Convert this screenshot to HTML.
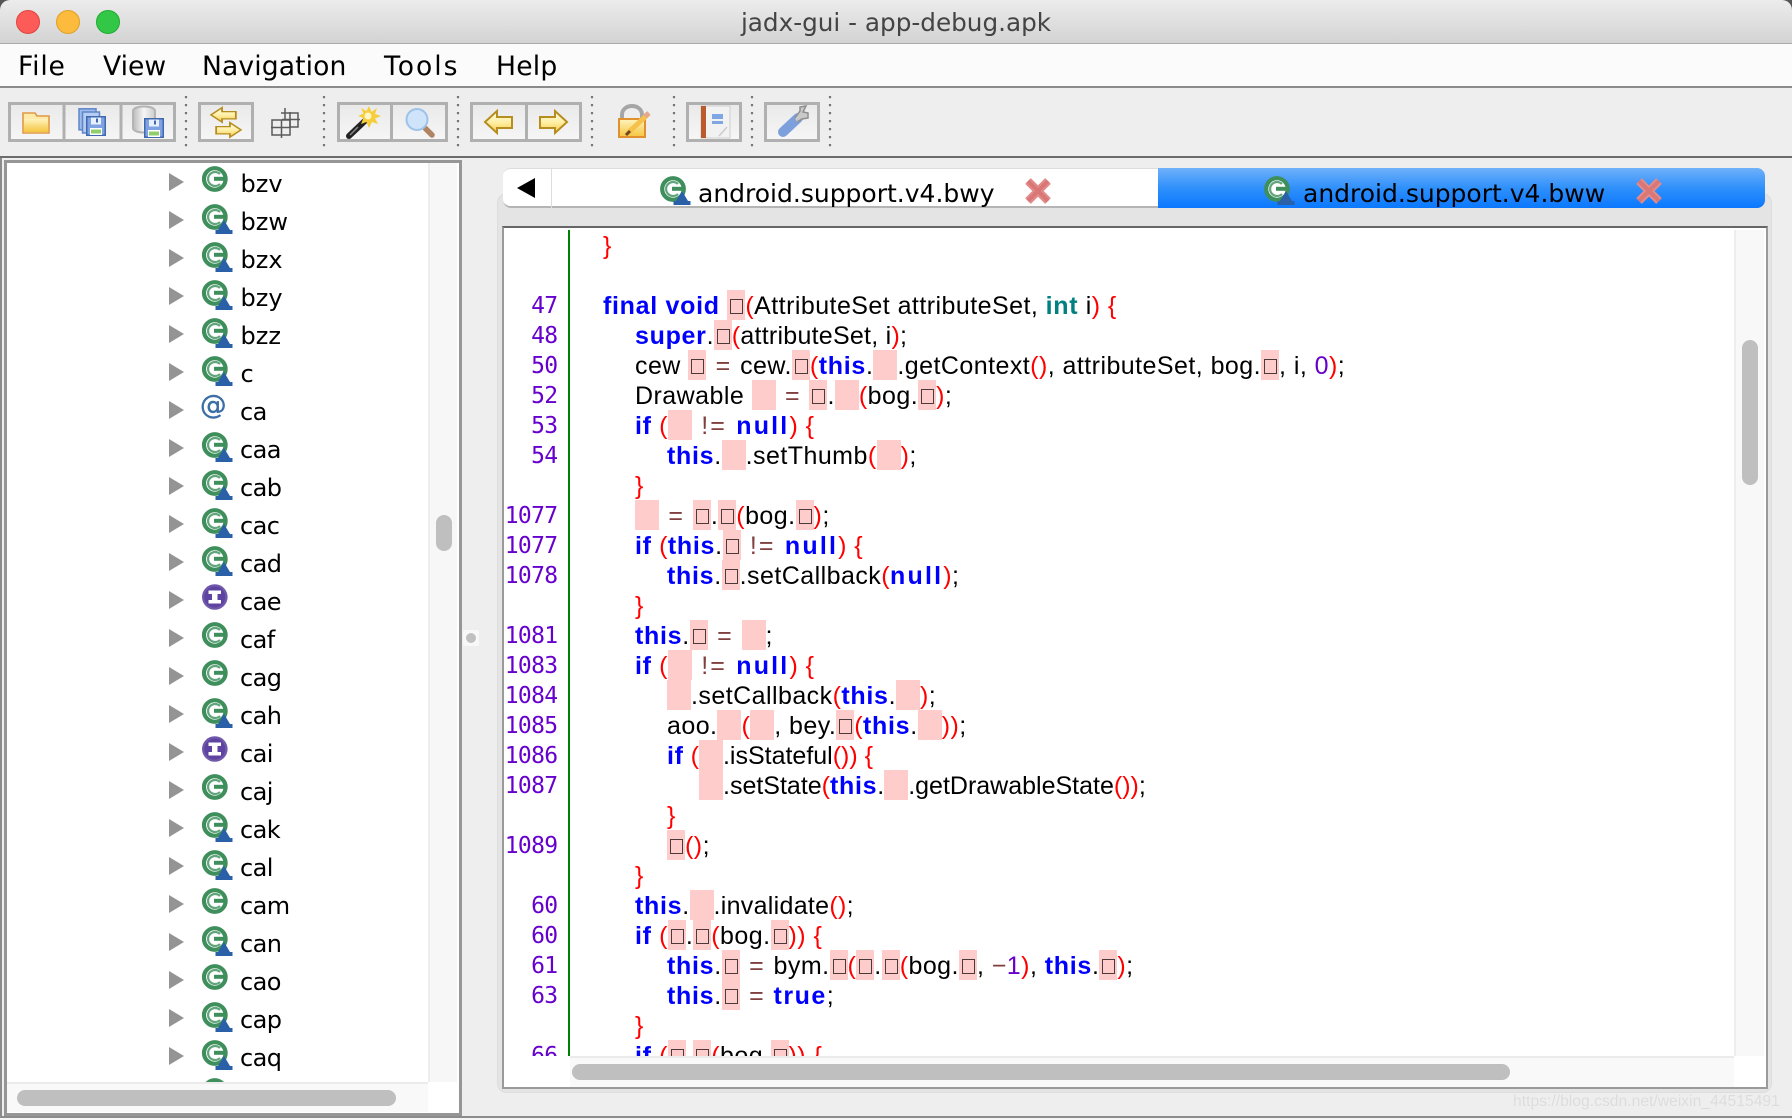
<!DOCTYPE html>
<html><head><meta charset="utf-8"><title>jadx-gui - app-debug.apk</title>
<style>
html,body{margin:0;padding:0;width:1792px;height:1120px;overflow:hidden;background:#eee}
div{position:absolute}
#title{left:0;top:0;width:1792px;height:43px;background:linear-gradient(#ececec,#d3d3d3);border-bottom:1px solid #a9a9a9;border-radius:10px 10px 0 0;box-sizing:content-box}
#corner{left:0;top:0;width:1792px;height:12px;background:#555}
#ttext{left:0;top:7px;width:1792px;text-align:center;font:24.7px/32px "DejaVu Sans",sans-serif;color:#444}
.lt{width:24px;height:24px;border-radius:50%;top:10px;box-sizing:border-box}
#menu{left:0;top:44px;width:1792px;height:42px;background:#fbfbfb;border-bottom:2px solid #8a8a8a}
.m{top:6px;font:26.6px/34px "DejaVu Sans",sans-serif;color:#000}
#tbline{left:0;top:156px;width:1792px;height:2px;background:#6c6c6c}
#winl{left:0;top:158px;width:2px;height:958px;background:#8c8c8c}
#winb{left:0;top:1116px;width:1792px;height:2px;background:#8c8c8c}
#winb2{left:0;top:1118px;width:1792px;height:2px;background:#f6f6f6}
#tree{left:4px;top:160px;width:458px;height:956px;box-sizing:border-box;border:3px solid #969696;background:#fff}
#treec{left:6px;top:163px;width:422px;height:919px;overflow:hidden}
#treec svg{position:absolute;left:-6px;top:-163px}
#rows text.c{letter-spacing:-.6px}
#tv{left:428px;top:163px;width:29px;height:919px;background:#f7f7f7;border-left:2px solid #ededed;box-sizing:border-box}
#tvt{left:436px;top:515px;width:16px;height:36px;background:#bfbfbf;border-radius:8px}
#th{left:7px;top:1082px;width:421px;height:30px;background:#f9f9f9;border-top:2px solid #ebebeb;box-sizing:border-box}
#tht{left:17px;top:1090px;width:379px;height:16px;background:#bfbfbf;border-radius:8px}
#knobb{left:463px;top:630px;width:16px;height:16px;background:#f8f8f8;border-radius:2px}
#knob{left:466px;top:633px;width:10px;height:10px;background:#c0c0c0;border-radius:50%}
#pane{left:497px;top:193px;height:900px;width:1275px;background:#e4e4e4;border-radius:10px;box-shadow:inset 0 0 0 1px #ddd}
#tabs{left:503px;top:168px;width:1262px;height:40px;background:#fff;border-radius:8px;box-sizing:border-box;border-bottom:2px solid #b4b4b4;border-top:1px solid #ddd}
#tdiv{left:551px;top:168px;width:1px;height:40px;background:#ddd}
#tab2{left:1158px;top:168px;width:607px;height:40px;background:linear-gradient(#6fb1fa,#2f90fb 50%,#0a78ff);border-radius:0 8px 8px 0}
.tt{font:25px/30px "DejaVu Sans",sans-serif;color:#000;white-space:pre;top:179px}
#cb{left:502px;top:226px;width:1266px;height:863px;box-sizing:border-box;background:#fff;border:2px solid #9a9a9a;border-top-color:#666}
#gl{left:568px;top:230px;width:2px;height:826px;background:#008000}
#nums{left:504px;top:230px;width:53.500px;height:826px;overflow:hidden;font:23px/32px "DejaVu Sans Mono",monospace;letter-spacing:-.65px;color:#6600cc;text-align:right}
#nums p{margin:0;height:30px}
#code{left:571px;top:230px;width:1163px;height:826px;overflow:hidden;font:25px/32px "Liberation Sans",sans-serif;color:#000;white-space:pre;letter-spacing:.45px}
#code p{margin:0;height:30px;padding-left:32px}
#code p.a{padding-left:64px}#code p.c{padding-left:96px}#code p.d{padding-left:128px}
#code b{color:#00f;letter-spacing:.7px}
#code b.l{letter-spacing:2.2px}
#code b.t{letter-spacing:1.5px}
#code em{color:#008080;font-style:normal;font-weight:bold;letter-spacing:.7px}
#code u{color:#f00;text-decoration:none}
#code s{color:#804040;text-decoration:none;margin:0 2px}
#code s.ne{letter-spacing:2px}
#code s.mi{margin:0}
#code var{color:#60c;font-style:normal}
#code i,#code tt{display:inline-block;background:#fcc;height:30px;vertical-align:top;position:relative}
#code i{width:18px}#code tt{width:24px}
#code i:after{content:"";position:absolute;left:3px;top:9px;width:11px;height:13px;border:1px solid #4a3a3a}
#vt{left:1734px;top:230px;width:30px;height:826px;background:#f8f8f8;border-left:2px solid #eee;box-sizing:border-box}
#vtt{left:1742px;top:340px;width:16px;height:145px;background:#bfbfbf;border-radius:8px}
#ht{left:570px;top:1056px;width:1164px;height:31px;background:#f9f9f9;border-top:2px solid #ebebeb;box-sizing:border-box}
#htt{left:572px;top:1064px;width:938px;height:16px;background:#bfbfbf;border-radius:8px}
#wm{left:1513px;top:1092px;font:15.7px/20px "Liberation Sans",sans-serif;color:#dcdcdc;white-space:nowrap;text-shadow:0 0 1px #f4f4f4}
svg text{white-space:pre}
</style></head><body>
<div id="corner"></div>
<div id="title"></div>
<div id="ttext">jadx-gui - app-debug.apk</div>
<div class="lt" style="left:16px;background:#fc5b57;border:1px solid #e0443e"></div>
<div class="lt" style="left:56px;background:#fdbb3d;border:1px solid #dea123"></div>
<div class="lt" style="left:96px;background:#33c748;border:1px solid #1fab2e"></div>
<div id="menu"></div>
<div class="m" style="left:18px;top:50px;letter-spacing:.8px">File</div>
<div class="m" style="left:103px;top:50px">View</div>
<div class="m" style="left:202px;top:50px;letter-spacing:.1px">Navigation</div>
<div class="m" style="left:384px;top:50px;letter-spacing:2px">Tools</div>
<div class="m" style="left:496px;top:50px;letter-spacing:.2px">Help</div>

<svg style="position:absolute;left:0;top:0" width="1792" height="160" viewBox="0 0 1792 160">
<defs>
<linearGradient id="bf" x1="0" y1="0" x2="0" y2="1"><stop offset="0" stop-color="#e9e9e9"/><stop offset="1" stop-color="#f6f6f6"/></linearGradient>
<linearGradient id="yf" x1="0" y1="0" x2="0" y2="1"><stop offset="0" stop-color="#fff3bd"/><stop offset="1" stop-color="#f5c53f"/></linearGradient>
<linearGradient id="yf2" x1="0" y1="0" x2="0" y2="1"><stop offset="0" stop-color="#fffbe0"/><stop offset=".5" stop-color="#fff0a8"/><stop offset="1" stop-color="#f7c948"/></linearGradient>
<linearGradient id="cy" x1="0" y1="0" x2="1" y2="0"><stop offset="0" stop-color="#bbb"/><stop offset=".5" stop-color="#f6f6f6"/><stop offset="1" stop-color="#ccc"/></linearGradient>
<g id="fl"><rect x=".75" y=".75" width="18.500" height="18.500" fill="#7fa3e2" stroke="#3f68ad" stroke-width="1.500"/><rect x="5" y="1.500" width="10" height="7" fill="#e8f0ff"/><rect x="10" y="2.500" width="2" height="4" fill="#3f68ad"/><rect x="4" y="12" width="12" height="7" fill="#fff"/><rect x="5" y="13.500" width="10" height="4" fill="#8fce6b"/></g>
<path id="lar" d="M0 12 L12 1 V7 H27 V18 H12 V23 Z" stroke="#b68d1f" stroke-width="2" fill="url(#yf2)" stroke-linejoin="miter"/>
</defs>
<g fill="url(#bf)" stroke="#b0b0b0" stroke-width="3">
<rect x="9.500" y="103.500" width="165" height="37"/><path d="M64 103V140M121 103V140" fill="none"/>
<rect x="199.500" y="103.500" width="53" height="37"/>
<rect x="338.500" y="103.500" width="108" height="37"/><path d="M391.500 103V140" fill="none"/>
<rect x="471.500" y="103.500" width="109" height="37"/><path d="M526.500 103V140" fill="none"/>
<rect x="687.500" y="103.500" width="53" height="37"/>
<rect x="765.500" y="103.500" width="53" height="37"/>
</g>
<g stroke="#777" stroke-width="2.200" stroke-dasharray="2.200 5.800">
<path d="M186 96V147M324 96V147M458 96V147M592 96V147M674 96V147M752 96V147M830 96V147"/>
</g>
<!-- folder -->
<path d="M23 113H35L37 116H49V133H23Z" fill="#fde9a8" stroke="#e09a45" stroke-width="1.600"/>
<path d="M24 119H48V132H24Z" fill="url(#yf)"/>
<!-- copies -->
<rect x="79" y="108.800" width="17" height="21" fill="#9fbbec" stroke="#5f86c8" stroke-width="1.500"/>
<rect x="82.500" y="112" width="17" height="21" fill="#b6ccf2" stroke="#5f86c8" stroke-width="1.500"/>
<use href="#fl" x="86" y="116"/>
<!-- db -->
<path d="M133 111C133 105 155 105 155 111V128C155 134 133 134 133 128Z" fill="url(#cy)" stroke="#b4b4b4" stroke-width="2"/>
<use href="#fl" x="144" y="118"/>
<!-- sync -->
<g transform="translate(211,107) scale(.92,.66)"><use href="#lar"/></g>
<g transform="translate(241,122) scale(-.92,.66)"><use href="#lar"/></g>
<!-- grid -->
<g fill="none" stroke="#5a5a5a" stroke-width="1.500">
<path d="M281 113H298V127H290"/>
<path d="M272 120H290V135H272Z"/>
<path d="M281.500 120V138M290 112V127M285 108V120M271 127.500H291M282 119.500H300"/>
</g>
<!-- wand -->
<path d="M349 136L368 118" stroke="#222" stroke-width="6" stroke-linecap="round"/>
<path d="M350 135L358 127" stroke="#888" stroke-width="1.500"/>
<path d="M369 106L371.500 112L377 108L375 114L381 116L375 118.500L378 124L372 122L369 128L366.500 122L361 124L363.500 118L358 116L363.500 113.500L361 108L366.500 111Z" fill="#f6cd3a"/>
<circle cx="368" cy="116" r="3.500" fill="#fff6c8"/>
<!-- magnifier -->
<path d="M425 128L432 135" stroke="#b18564" stroke-width="5.500" stroke-linecap="round"/>
<circle cx="417" cy="119.500" r="10.500" fill="#cfe3fa" stroke="#9cc3ea" stroke-width="2"/>
<!-- arrows -->
<use href="#lar" x="485" y="110"/>
<g transform="translate(567,110) scale(-1,1)"><use href="#lar"/></g>
<!-- lock -->
<path d="M622 120V115C622 103 642 103 642 115V120" fill="none" stroke="#a6a6a6" stroke-width="4"/>
<rect x="619" y="119" width="26" height="18" fill="url(#yf)" stroke="#e0902f" stroke-width="2"/>
<path d="M628 133L648 114" stroke="#f6c14a" stroke-width="5"/>
<path d="M645 116.500L649 113" stroke="#e6a888" stroke-width="5"/>
<path d="M626 135L630 131" stroke="#6b4820" stroke-width="3"/>
<!-- book -->
<rect x="701" y="106" width="29" height="32" fill="#f2f2f2" stroke="#cfcfcf"/>
<rect x="701" y="106" width="5" height="32" fill="#bb5a2c"/>
<rect x="712" y="114" width="11" height="5" fill="#7fa7e4"/><rect x="712" y="121" width="11" height="3" fill="#7fa7e4"/>
<path d="M719 136L727 127" stroke="#ccc" stroke-width="1.500"/>
<!-- wrench -->
<path d="M783 132L798 118" stroke="#7da0dd" stroke-width="10" stroke-linecap="round"/>
<path d="M795 118L800 111V107L806 106L803 112L808 113V118L802 119L797 122" fill="#c9c9c9" stroke="#8f8f8f" stroke-width="1.500"/>
</svg>

<div id="tbline"></div><div id="winl"></div><div id="winb"></div><div id="winb2"></div>

<div id="tree"></div>
<div id="treec">
<svg width="1792" height="1120" viewBox="0 0 1792 1120" font-family="'DejaVu Sans',sans-serif" font-size="24" fill="#000">
<defs>
<polygon id="ar" points="169,173 184,182 169,191" fill="#949494"/>
<g id="g"><circle cx="12.800" cy="13" r="10.800" fill="#fff" stroke="#3f8f5c" stroke-width="4.200"/><path d="M18 8A7 7 0 1 0 18 18" fill="none" stroke="#62a57c" stroke-width="2.200"/><rect x="12" y="10.800" width="13" height="4" fill="#3f8f5c"/></g>
<path id="tr" d="M22 16L25 21L28 26H30.500V30H13.500V26H16L19 21Z" fill="#2a60a8"/>
<g id="p"><use href="#g"/><use href="#tr"/></g>
<g id="n"><circle cx="12.800" cy="13" r="12.800" fill="#7058ab"/><circle cx="12.800" cy="13" r="10.500" fill="#5e43a0"/><path d="M6.500 6.500H19V10H15.500V16H19V19.500H6.500V16H10V10H6.500Z" fill="#fff"/></g>
</defs>
<g id="rows">
<use href="#ar"/><use href="#g" x="202" y="166"/><text x="240.500" y="192">bzv</text>
<use href="#ar" y="38"/><use href="#p" x="202" y="204"/><text x="240.500" y="230">bzw</text>
<use href="#ar" y="76"/><use href="#p" x="202" y="242"/><text x="240.500" y="268">bzx</text>
<use href="#ar" y="114"/><use href="#p" x="202" y="280"/><text x="240.500" y="306">bzy</text>
<use href="#ar" y="152"/><use href="#p" x="202" y="318"/><text x="240.500" y="344">bzz</text>
<use href="#ar" y="190"/><use href="#p" x="202" y="356"/><text x="240.500" y="382">c</text>
<use href="#ar" y="228"/><text x="200" y="414" font-size="26.500" fill="#3b6ea5" stroke="#3b6ea5" stroke-width=".4">@</text><text class="c" x="240" y="420">ca</text>
<use href="#ar" y="266"/><use href="#p" x="202" y="432"/><text class="c" x="240" y="458">caa</text>
<use href="#ar" y="304"/><use href="#p" x="202" y="470"/><text class="c" x="240" y="496">cab</text>
<use href="#ar" y="342"/><use href="#p" x="202" y="508"/><text class="c" x="240" y="534">cac</text>
<use href="#ar" y="380"/><use href="#p" x="202" y="546"/><text class="c" x="240" y="572">cad</text>
<use href="#ar" y="418"/><use href="#n" x="202" y="584"/><text class="c" x="240" y="610">cae</text>
<use href="#ar" y="456"/><use href="#g" x="202" y="622"/><text class="c" x="240" y="648">caf</text>
<use href="#ar" y="494"/><use href="#g" x="202" y="660"/><text class="c" x="240" y="686">cag</text>
<use href="#ar" y="532"/><use href="#p" x="202" y="698"/><text class="c" x="240" y="724">cah</text>
<use href="#ar" y="570"/><use href="#n" x="202" y="736"/><text class="c" x="240" y="762">cai</text>
<use href="#ar" y="608"/><use href="#g" x="202" y="774"/><text class="c" x="240" y="800">caj</text>
<use href="#ar" y="646"/><use href="#p" x="202" y="812"/><text class="c" x="240" y="838">cak</text>
<use href="#ar" y="684"/><use href="#p" x="202" y="850"/><text class="c" x="240" y="876">cal</text>
<use href="#ar" y="722"/><use href="#g" x="202" y="888"/><text class="c" x="240" y="914">cam</text>
<use href="#ar" y="760"/><use href="#p" x="202" y="926"/><text class="c" x="240" y="952">can</text>
<use href="#ar" y="798"/><use href="#g" x="202" y="964"/><text class="c" x="240" y="990">cao</text>
<use href="#ar" y="836"/><use href="#p" x="202" y="1002"/><text class="c" x="240" y="1028">cap</text>
<use href="#ar" y="874"/><use href="#p" x="202" y="1040"/><text class="c" x="240" y="1066">caq</text>
<use href="#g" x="202" y="1078"/>
</g>
</svg>
</div>
<div id="tv"></div><div id="tvt"></div><div id="th"></div><div id="tht"></div>
<div id="knobb"></div><div id="knob"></div>

<div id="pane"></div>
<div id="tabs"></div><div id="tdiv"></div><div id="tab2"></div>
<div class="tt" style="left:698px">android.support.v4.bwy</div>
<div class="tt" style="left:1303px">android.support.v4.bww</div>
<svg style="position:absolute;left:0;top:0" width="1792" height="240" viewBox="0 0 1792 240">
<defs>
<g id="tg"><circle cx="13" cy="13" r="10.800" fill="#fff" stroke="#3f8f5c" stroke-width="4.200"/><path d="M18 8A7 7 0 1 0 18 18" fill="none" stroke="#62a57c" stroke-width="2.200"/><rect x="12" y="10.800" width="13" height="4" fill="#3f8f5c"/><path d="M22 15L25 20L28 25H30.500V29H13.500V25H16L19 20Z" fill="#2a60a8"/></g>
<g id="tx"><path d="M3 3L23 23M23 3L3 23" stroke="#e38a8a" stroke-width="8"/><path d="M3 3L23 23M23 3L3 23" stroke="#d97777" stroke-width="4"/></g>
</defs>
<polygon points="535,178 535,198 517,188" fill="#000"/>
<use href="#tg" x="660" y="176"/><use href="#tg" x="1264" y="176"/>
<use href="#tx" x="1025" y="178"/><use href="#tx" x="1636" y="178"/>
</svg>

<div id="cb"></div>
<div id="nums">
<p>&nbsp;</p><p>&nbsp;</p><p>47</p><p>48</p><p>50</p><p>52</p><p>53</p><p>54</p><p>&nbsp;</p><p>1077</p><p>1077</p><p>1078</p><p>&nbsp;</p><p>1081</p><p>1083</p><p>1084</p><p>1085</p><p>1086</p><p>1087</p><p>&nbsp;</p><p>1089</p><p>&nbsp;</p><p>60</p><p>60</p><p>61</p><p>63</p><p>&nbsp;</p><p>66</p>
</div>
<div id="gl"></div>
<div id="code"><p><u>}</u></p><p> </p><p><b>final void </b><i></i><u>(</u>AttributeSet attributeSet, <em>int</em> i<u>) {</u></p><p class="a" style="letter-spacing:.25px"><b>super</b>.<i></i><u>(</u>attributeSet, i<u>)</u>;</p><p class="a">cew <i></i> <s>=</s> cew.<i></i><u>(</u><b>this</b>.<tt></tt>.getContext<u>()</u>, attributeSet, bog.<i></i>, i, <var>0</var><u>)</u>;</p><p class="a">Drawable <tt></tt> <s>=</s> <i></i>.<tt></tt><u>(</u>bog.<i></i><u>)</u>;</p><p class="a"><b>if</b> <u>(</u><tt></tt> <s class="ne">!=</s> <b class="l">null</b><u>) {</u></p><p class="c"><b>this</b>.<tt></tt>.setThumb<u>(</u><tt></tt><u>)</u>;</p><p class="a"><u>}</u></p><p class="a"><tt></tt> <s>=</s> <i></i>.<i></i><u>(</u>bog.<i></i><u>)</u>;</p><p class="a"><b>if</b> <u>(</u><b>this</b>.<i></i> <s class="ne">!=</s> <b class="l">null</b><u>) {</u></p><p class="c"><b>this</b>.<i></i>.setCallback<u>(</u><b class="l">null</b><u>)</u>;</p><p class="a"><u>}</u></p><p class="a"><b>this</b>.<i></i> <s>=</s> <tt></tt>;</p><p class="a"><b>if</b> <u>(</u><tt></tt> <s class="ne">!=</s> <b class="l">null</b><u>) {</u></p><p class="c"><tt></tt>.setCallback<u>(</u><b>this</b>.<tt></tt><u>)</u>;</p><p class="c">aoo.<tt></tt><u>(</u><tt></tt>, bey.<i></i><u>(</u><b>this</b>.<tt></tt><u>))</u>;</p><p class="c" style="letter-spacing:0"><b>if</b> <u>(</u><tt></tt>.isStateful<u>()) {</u></p><p class="d" style="letter-spacing:0"><tt></tt>.setState<u>(</u><b>this</b>.<tt></tt>.getDrawableState<u>())</u>;</p><p class="c"><u>}</u></p><p class="c"><i></i><u>()</u>;</p><p class="a"><u>}</u></p><p class="a" style="letter-spacing:.3px"><b>this</b>.<tt></tt>.invalidate<u>()</u>;</p><p class="a"><b>if</b> <u>(</u><i></i>.<i></i><u>(</u>bog.<i></i><u>)) {</u></p><p class="c"><b>this</b>.<i></i> <s>=</s> bym.<i></i><u>(</u><i></i>.<i></i><u>(</u>bog.<i></i>, <s class="mi">−</s><var>1</var><u>)</u>, <b>this</b>.<i></i><u>)</u>;</p><p class="c"><b>this</b>.<i></i> <s>=</s> <b class="t">true</b>;</p><p class="a"><u>}</u></p><p class="a"><b>if</b> <u>(</u><i></i>.<i></i><u>(</u>bog.<i></i><u>)) {</u></p></div>
<div id="vt"></div><div id="vtt"></div><div id="ht"></div><div id="htt"></div>
<div id="wm">https://blog.csdn.net/weixin_44515491</div>
</body></html>
